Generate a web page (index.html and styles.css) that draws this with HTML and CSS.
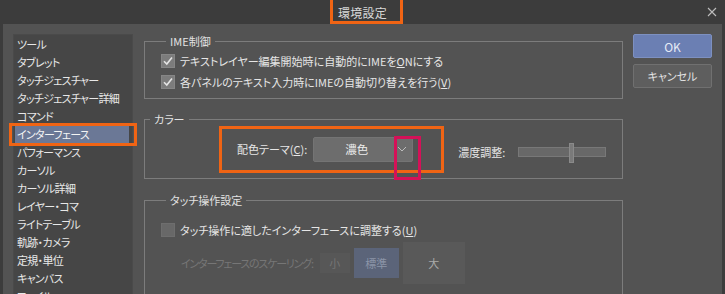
FILE: index.html
```html
<!DOCTYPE html>
<html lang="ja">
<head>
<meta charset="utf-8">
<title>環境設定</title>
<link rel="stylesheet" href="styles.css">
</head>
<body>
<div class="window">
  <div class="titlebar">
    <span class="title">環境設定</span>
    <span class="mark mark-title"></span>
    <svg class="close" width="10" height="10" viewBox="0 0 10 10"><path d="M1 1 L9 9 M9 1 L1 9" stroke="#bdbdbd" stroke-width="1.1" fill="none"/></svg>
  </div>
  <div class="main">
    <ul class="nav">
      <li>ツール</li>
      <li>タブレット</li>
      <li>タッチジェスチャー</li>
      <li>タッチジェスチャー詳細</li>
      <li>コマンド</li>
      <li class="sel">インターフェース<span class="mark mark-nav"></span></li>
      <li>パフォーマンス</li>
      <li>カーソル</li>
      <li>カーソル詳細</li>
      <li>レイヤー・コマ</li>
      <li>ライトテーブル</li>
      <li>軌跡・カメラ</li>
      <li>定規・単位</li>
      <li>キャンバス</li>
      <li>ファイル</li>
    </ul>
    <div class="content">
      <fieldset class="group g-ime">
        <legend>IME制御</legend>
        <div class="check-row"><span class="cb on"><svg width="14" height="14" viewBox="0 0 14 14"><path d="M3 7.2 L5.8 10 L11 3.6" stroke="#e4e4e4" stroke-width="1.6" fill="none"/></svg></span><span>テキストレイヤー編集開始時に自動的にIMEを<u>O</u>Nにする</span></div>
        <div class="check-row"><span class="cb on"><svg width="14" height="14" viewBox="0 0 14 14"><path d="M3 7.2 L5.8 10 L11 3.6" stroke="#e4e4e4" stroke-width="1.6" fill="none"/></svg></span><span>各パネルのテキスト入力時にIMEの自動切り替えを行う(<u>V</u>)</span></div>
      </fieldset>
      <fieldset class="group g-color">
        <legend>カラー</legend>
        <div class="color-row">
          <div class="hl">
            <span class="lbl">配色テーマ(<u>C</u>):</span>
            <div class="combo"><span class="combo-text">濃色</span><svg class="chev" width="10" height="6" viewBox="0 0 10 6"><path d="M1 1 L5 5 L9 1" stroke="#bcbcbc" stroke-width="1" fill="none"/></svg><span class="mark mark-arrow"></span></div>
          </div>
          <span class="lbl dens">濃度調整:</span>
          <div class="slider"><span class="thumb"></span></div>
        </div>
      </fieldset>
      <fieldset class="group g-touch">
        <legend>タッチ操作設定</legend>
        <div class="check-row"><span class="cb off"></span><span>タッチ操作に適したインターフェースに調整する(<u>U</u>)</span></div>
        <div class="scale-row">
          <span class="dim">インターフェースのスケーリング:</span>
          <span class="sbtn s-small">小</span>
          <span class="sbtn s-mid">標準</span>
          <span class="sbtn s-large">大</span>
        </div>
      </fieldset>
    </div>
    <div class="buttons">
      <div class="btn ok">OK</div>
      <div class="btn cancel">キャンセル</div>
    </div>
  </div>
</div>
</body>
</html>
```
FILE: styles.css
```css
* { box-sizing: border-box; }
html, body { margin: 0; padding: 0; }
body {
  width: 725px; height: 294px; overflow: hidden;
  background: #3c3c3c;
  font-family: "Noto Sans CJK JP", "Noto Sans", sans-serif;
  font-size: 11px;
  font-feature-settings: "palt";
  color: #e6e6e6;
}
u { text-decoration: underline; text-underline-offset: 1px; }
.window { width: 725px; height: 294px; display: flex; flex-direction: column; }
.titlebar {
  position: relative; height: 24px; flex: none;
  display: flex; align-items: center; justify-content: center;
  background: #3c3c3c; color: #d8d8d8; font-size: 12px;
}
.title { letter-spacing: 0.3px; }
.close { position: absolute; right: 8px; top: 7px; }
.mark { position: absolute; border: 3px solid #f06414; pointer-events: none; }
.mark-title { left: 330px; top: -3px; width: 73px; height: 27px; }
.main {
  flex: 1; margin: 0 3px; background: #535353;
  display: flex; padding: 10px 0 0 10px; overflow: hidden;
}
.nav {
  list-style: none; margin: 0; padding: 0;
  width: 120px; height: 300px; flex: none;
  background: #464646; border: 1px solid #4a4a4a;
}
.nav li {
  position: relative; height: 18px; line-height: 18px; letter-spacing: -0.7px;
  padding-left: 2px; margin: 0 3px 0 1px; white-space: nowrap; color: #e8e8e8;
}
.nav li.sel { background: #6b7896; color: #f4f4f4; }
.mark-nav { left: -6px; right: -8px; top: -2px; bottom: -3px; }
.content { width: 479px; margin-left: 11px; flex: none; display: flex; flex-direction: column; }
.group {
  margin: 0; padding: 0; border: 1px solid #7c7c7c; min-width: 0;
}
.group legend {
  margin-left: 5px; padding: 0 4px; line-height: 14px; height: 14px; color: #e2e2e2;
}
.g-ime { padding: 3px 0 6px 16px; }
.check-row { display: flex; align-items: center; height: 20px; gap: 5px; white-space: nowrap; }
.check-row + .check-row { margin-top: 1px; }
.cb { width: 14px; height: 14px; flex: none; display: block; }
.cb.on { background: #7c7c7c; border: 1px solid #868686; }
.cb.on svg { display: block; margin: -1px; }
.cb.off { background: #686868; border: 1px solid #6e6e6e; }
.g-color { margin-top: 13px; }
.color-row { height: 52px; display: flex; align-items: center; padding-left: 74px; }
.hl {
  display: flex; align-items: center; height: 47px;
  border: 3px solid #f06414; padding: 0 28px 0 15px; margin-top: -6px;
}
.lbl { white-space: nowrap; }
.combo {
  position: relative; margin-left: 6px; width: 100px; height: 25px;
  background: #6d6d6d; border: 1px solid #747474; border-radius: 2px;
  display: flex; align-items: center;
}
.combo-text { flex: 1; text-align: center; padding-left: 2px; color: #ececec; font-size: 11.5px; }
.chev { margin-right: 5px; }
.mark-arrow { border-color: #d41158; left: 80px; top: -2px; width: 27px; height: 44px; }
.dens { margin-left: 14px; }
.slider {
  position: relative; margin-left: 13px; width: 88px; height: 10px;
  background: #686868; border: 1px solid #787878;
}
.thumb {
  position: absolute; left: 50px; top: -5px; width: 5px; height: 20px;
  background: #7a7a7a; border: 1px solid #8a8a8a;
}
.g-touch { margin-top: 14px; padding: 13px 0 30px 16px; }
.scale-row { display: flex; align-items: center; height: 42px; margin-top: 2px; padding-left: 20px; }
.dim { color: #767676; white-space: nowrap; letter-spacing: -1.2px; }
.sbtn { display: flex; align-items: center; justify-content: center; flex: none; }
.s-small { margin-left: 7px; width: 30px; height: 20px; background: #575757; color: #757575; }
.s-mid { margin-left: 4px; width: 45px; height: 30px; background: #5b6479; color: #8c95a8; }
.s-large { margin-left: 4px; width: 62px; height: 42px; background: #595959; color: #aaaaaa; }
.buttons { margin-left: 10px; width: 79px; flex: none; display: flex; flex-direction: column; gap: 6px; }
.btn {
  height: 24px; display: flex; align-items: center; justify-content: center; border-radius: 2px;
}
.ok { background: #6b7fb3; border: 1px solid #7d90c0; color: #e6ebf6; font-size: 12px; }
.cancel { background: #5e5e5e; border: 1px solid #707070; color: #e2e2e2; }
```
